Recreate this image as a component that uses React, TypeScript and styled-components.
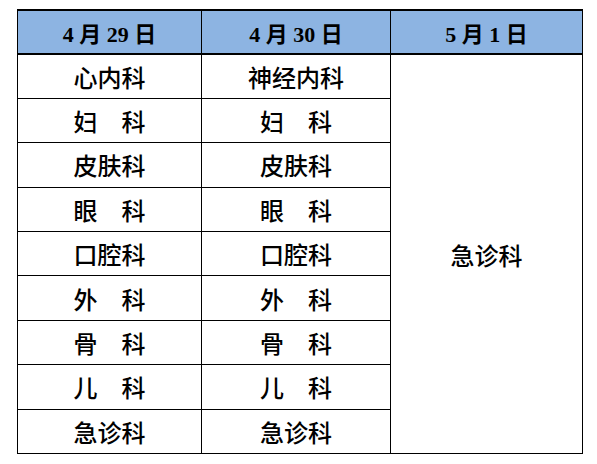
import React from 'react';
import styled, { createGlobalStyle } from 'styled-components';

const GlobalStyle = createGlobalStyle`
  html, body {
    margin: 0;
    padding: 0;
    background: #ffffff;
  }
`;

const days = ['4 月 29 日', '4 月 30 日', '5 月 1 日'];

// 前两天的科室安排，5 月 1 日只有急诊
const schedule: [string, string][] = [
  ['心内科', '神经内科'],
  ['妇　科', '妇　科'],
  ['皮肤科', '皮肤科'],
  ['眼　科', '眼　科'],
  ['口腔科', '口腔科'],
  ['外　科', '外　科'],
  ['骨　科', '骨　科'],
  ['儿　科', '儿　科'],
  ['急诊科', '急诊科'],
];

export default function App(): React.ReactElement {
  return (
    <>
      <GlobalStyle />
      <Page>
        <Table>
          <colgroup>
            <col style={{ width: 184 }} />
            <col style={{ width: 189 }} />
            <col style={{ width: 192 }} />
          </colgroup>
          <thead>
            <tr>
              {days.map(day => (
                <HeadCell key={day}>{day}</HeadCell>
              ))}
            </tr>
          </thead>
          <tbody>
            {schedule.map(([first, second], i) => (
              <Row key={i}>
                <Cell>{first}</Cell>
                <Cell>{second}</Cell>
                {i === 0 && <Cell rowSpan={schedule.length}>急诊科</Cell>}
              </Row>
            ))}
          </tbody>
        </Table>
      </Page>
    </>
  );
}

const Page = styled.div`
  width: 597px;
  height: 464px;
  padding: 9px 0 0 17px;
  box-sizing: border-box;
`;

const Table = styled.table`
  border-collapse: collapse;
  table-layout: fixed;
  width: 566px;
  color: #000000;
`;

const HeadCell = styled.th`
  height: 42px;
  padding: 0;
  background: #8db4e2;
  border: 2px solid #000000;
  border-width: 2px 1.5px;
  font-family: 'Liberation Serif', 'Noto Sans CJK SC', serif;
  font-weight: bold;
  font-size: 22px;
  text-align: center;
  vertical-align: middle;
`;

const Row = styled.tr`
  height: 44.4px;
`;

const Cell = styled.td`
  padding: 0;
  border: 1.5px solid #000000;
  font-family: 'Noto Sans CJK SC', sans-serif;
  font-weight: 500;
  font-size: 24px;
  text-align: center;
  vertical-align: middle;
`;
